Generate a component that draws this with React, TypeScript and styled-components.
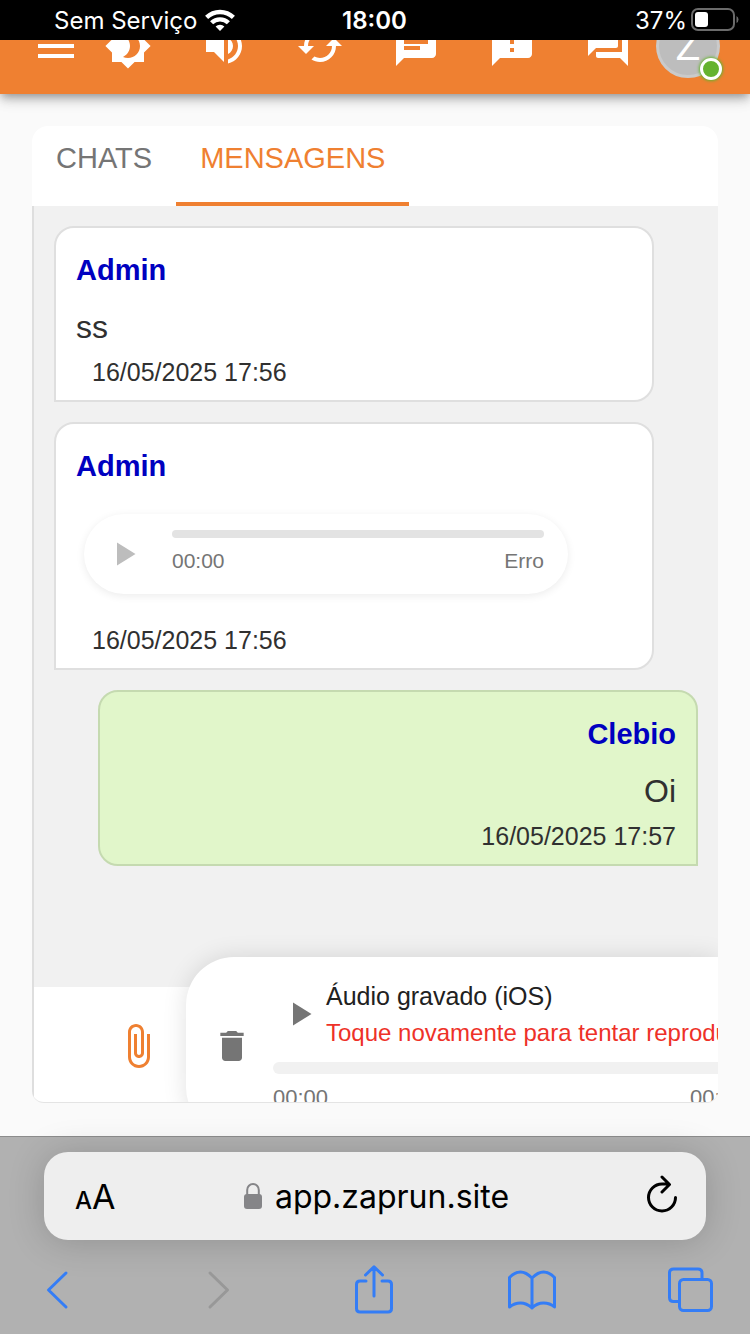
import React from "react";
import styled, { createGlobalStyle, css } from "styled-components";

const GlobalStyle = createGlobalStyle`
  *, *::before, *::after { box-sizing: border-box; }
  html, body, #root { height: 100%; }
  body {
    margin: 0;
    background: #fafafa;
    font-family: "Liberation Sans", Helvetica, Arial, sans-serif;
    color: #303030;
  }
  button {
    font: inherit;
    color: inherit;
    background: none;
    border: 0;
    padding: 0;
    cursor: pointer;
  }
  svg { display: block; flex: none; }
`;

const systemFont = css`
  font-family: Inter, "Liberation Sans", sans-serif;
`;

const Screen = styled.div`
  display: flex;
  flex-direction: column;
  min-height: 100vh;
  overflow: hidden;
`;

const StatusBar = styled.div`
  ${systemFont}
  position: relative;
  z-index: 3;
  display: grid;
  grid-template-columns: 1fr auto 1fr;
  align-items: center;
  height: 40px;
  padding: 0 11px 0 54px;
  background: #000;
  color: #fff;
  font-size: 24px;
`;

const StatusGroup = styled.div<{ $end?: boolean }>`
  display: flex;
  align-items: center;
  justify-content: ${(p) => (p.$end ? "flex-end" : "flex-start")};
  gap: ${(p) => (p.$end ? "4px" : "8px")};
`;

const Clock = styled.time`
  font-weight: 600;
  padding-right: 44px;
`;

const AppBar = styled.header`
  position: relative;
  z-index: 2;
  display: flex;
  align-items: flex-end;
  height: 54px;
  padding: 0 30px 0 32px;
  background: #ef8031;
  color: #fff;
  box-shadow: 0 4px 8px -2px rgba(0, 0, 0, 0.3), 0 8px 10px rgba(0, 0, 0, 0.1),
    0 2px 20px rgba(0, 0, 0, 0.1);
`;

const BarActions = styled.div`
  display: flex;
  flex: 1;
  justify-content: space-between;
  padding: 0 24px 24px 24px;
`;

const BarButton = styled.button`
  display: block;
`;

const MenuButton = styled(BarButton)`
  margin-bottom: 24px;
`;

const AvatarButton = styled.button`
  position: relative;
  width: 64px;
  height: 64px;
  margin-bottom: 16px;
  border-radius: 50%;
  border: 3px solid #cacaca;
  background: #bdbdbd;
  color: #fff;
  font-size: 40px;
  line-height: 56px;
`;

const OnlineDot = styled.span`
  position: absolute;
  right: -5px;
  bottom: -5px;
  width: 22px;
  height: 22px;
  border: 3px solid #fff;
  border-radius: 50%;
  background: #65b32e;
  box-shadow: 0 0 3px 1px #65b32e;
`;

const Page = styled.main`
  display: flex;
  flex: 1;
  flex-direction: column;
  padding: 32px 32px 33px;
`;

const Panel = styled.section`
  display: flex;
  flex: 1;
  flex-direction: column;
  overflow: hidden;
  border-radius: 16px 16px 12px 12px;
  border-bottom: 1px solid #e4e4e4;
  background: #fff;
`;

const Tabs = styled.nav`
  display: flex;
  height: 80px;
`;

const Tab = styled.button<{ $active?: boolean }>`
  height: 80px;
  padding: 0 24px 12px;
  border-bottom: 4px solid ${(p) => (p.$active ? "#ef8031" : "transparent")};
  color: ${(p) => (p.$active ? "#ef8031" : "#757575")};
  font-size: 29px;
  line-height: 32px;
`;

const Conversation = styled.div`
  display: flex;
  flex: 1;
  flex-direction: column;
  border-left: 2px solid #dedede;
`;

const Messages = styled.div`
  display: flex;
  flex: 1;
  flex-direction: column;
  gap: 20px;
  padding: 20px;
  background: #f1f1f1;
`;

const Bubble = styled.article<{ $own?: boolean }>`
  display: flex;
  flex-direction: column;
  width: 600px;
  max-width: 94%;
  padding: 24px 20px 12px;
  border: 2px solid ${(p) => (p.$own ? "#c5dab0" : "#dfdfdf")};
  border-radius: ${(p) => (p.$own ? "20px 20px 0 20px" : "20px 20px 20px 0")};
  background: ${(p) => (p.$own ? "#e1f6ca" : "#fff")};
  align-self: ${(p) => (p.$own ? "flex-end" : "flex-start")};
  align-items: ${(p) => (p.$own ? "flex-end" : "stretch")};
`;

const Author = styled.h2`
  margin: 0 0 20px;
  color: #0000c0;
  font-size: 29px;
  line-height: 36px;
`;

const MessageText = styled.p`
  margin: 0 0 10px;
  font-size: 32px;
  line-height: 38px;
`;

const Stamp = styled.time<{ $own?: boolean }>`
  padding-left: ${(p) => (p.$own ? "0" : "16px")};
  font-size: 25px;
  line-height: 32px;
`;

const Player = styled.div`
  display: flex;
  gap: 36px;
  width: 484px;
  height: 80px;
  margin: 10px 0 30px 8px;
  padding: 16px 24px 0 32px;
  border-radius: 40px;
  background: #fff;
  box-shadow: 0 2px 8px rgba(0, 0, 0, 0.08);
`;

const PlayButton = styled.button<{ $muted?: boolean }>`
  align-self: ${(p) => (p.$muted ? "flex-start" : "center")};
  color: ${(p) => (p.$muted ? "#bdbdbd" : "#757575")};
`;

const Timeline = styled.div`
  flex: 1;
`;

const Track = styled.div<{ $large?: boolean }>`
  height: ${(p) => (p.$large ? "12px" : "8px")};
  border-radius: 6px;
  background: ${(p) => (p.$large ? "#f1f1f1" : "#e3e3e3")};
`;

const Times = styled.div<{ $large?: boolean }>`
  display: flex;
  justify-content: space-between;
  padding-top: ${(p) => (p.$large ? "12px" : "11px")};
  color: #757575;
  font-size: ${(p) => (p.$large ? "22px" : "21px")};
  line-height: 24px;
`;

const Composer = styled.div`
  display: flex;
  height: 115px;
  justify-content: space-between;
`;

const AttachButton = styled.button`
  height: 48px;
  margin: 35px 0 0 80px;
  color: #ef8031;
`;

const Recorder = styled.div`
  position: relative;
  z-index: 1;
  display: flex;
  flex: none;
  width: 532px;
  height: 178px;
  margin-top: -30px;
  padding: 22px 0 0 26px;
  border-radius: 48px 0 0 48px;
  background: #fff;
  box-shadow: 0 0 24px rgba(0, 0, 0, 0.12);
`;

const TrashButton = styled.button`
  width: 40px;
  height: 40px;
  margin-top: 47px;
  color: #757575;
`;

const Recording = styled.div`
  display: flex;
  flex: none;
  flex-direction: column;
  width: 472px;
  margin-left: 21px;
`;

const RecordingHead = styled.div`
  display: flex;
  gap: 14px;
  padding-left: 19px;
`;

const RecordingTitle = styled.div`
  color: #212121;
  font-size: 25px;
  line-height: 34px;
  white-space: nowrap;
`;

const RecordingError = styled.div`
  margin-top: 4px;
  color: #ee3128;
  font-size: 24px;
  line-height: 32px;
  white-space: nowrap;
`;

const RecordingTimeline = styled.div`
  padding-top: 13px;
`;

const Browser = styled.footer`
  ${systemFont}
  height: 198px;
  border-top: 1px solid #8c8c8c;
  background: #b1b1b1;
`;

const AddressBar = styled.div`
  display: grid;
  grid-template-columns: 1fr auto 1fr;
  align-items: center;
  height: 88px;
  margin: 15px 44px 0;
  padding: 0 28px 0 31px;
  border-radius: 24px;
  background: #eee;
  box-shadow: 0 2px 36px rgba(0, 0, 0, 0.18);
  color: #000;
`;

const TextSize = styled.button`
  justify-self: start;
  padding-top: 6px;
  font-size: 24px;
  font-weight: 500;
  line-height: 44px;
`;

const LargeLetter = styled.span`
  font-size: 34px;
  font-weight: 400;
`;

const Address = styled.div`
  display: flex;
  align-items: center;
  gap: 13px;
  font-size: 32px;
`;

const ReloadButton = styled.button`
  justify-self: end;
`;

const Toolbar = styled.nav`
  display: flex;
  justify-content: space-between;
  align-items: center;
  height: 52px;
  margin: 24px 35px 0 32px;
  color: #347df6;
`;

const ToolButton = styled.button`
  display: flex;
  justify-content: center;
  width: 50px;
  &:disabled { color: #989898; }
`;

const icons = {
  menu: "M3 18h18v-2H3v2zm0-5h18v-2H3v2zm0-7v2h18V6H3z",
  theme:
    "M20 8.69V4h-4.69L12 .69 8.69 4H4v4.69L.69 12 4 15.31V20h4.69L12 23.31 15.31 20H20v-4.69L23.31 12 20 8.69zM12 18c-.89 0-1.74-.2-2.5-.55C11.56 16.5 13 14.42 13 12s-1.44-4.5-3.5-5.45C10.26 6.2 11.11 6 12 6c3.31 0 6 2.69 6 6s-2.69 6-6 6z",
  volume:
    "M3 9v6h4l5 5V4L7 9H3zm13.5 3c0-1.77-1.02-3.29-2.5-4.03v8.05c1.48-.73 2.5-2.25 2.5-4.02zM14 3.23v2.06c2.89.86 5 3.54 5 6.71s-2.11 5.85-5 6.71v2.06c4.01-.91 7-4.49 7-8.77s-2.99-7.86-7-8.77z",
  sync:
    "M19 8l-4 4h3c0 3.31-2.69 6-6 6-1.01 0-1.97-.25-2.8-.7l-1.46 1.46C8.97 19.54 10.43 20 12 20c4.42 0 8-3.58 8-8h3l-4-4zM6 12c0-3.31 2.69-6 6-6 1.01 0 1.97.25 2.8.7l1.46-1.46C15.03 4.46 13.57 4 12 4c-4.42 0-8 3.58-8 8H1l4 4 4-4H6z",
  chat:
    "M20 2H4c-1.1 0-1.99.9-1.99 2L2 22l4-4h14c1.1 0 2-.9 2-2V4c0-1.1-.9-2-2-2zM6 9h12v2H6V9zm8 5H6v-2h8v2zm4-6H6V6h12v2z",
  notice:
    "M20 2H4c-1.1 0-1.99.9-1.99 2L2 22l4-4h14c1.1 0 2-.9 2-2V4c0-1.1-.9-2-2-2zm-7 9h-2V5h2v6zm0 4h-2v-2h2v2z",
  forum:
    "M21 6h-2v9H6v2c0 .55.45 1 1 1h11l4 4V7c0-.55-.45-1-1-1zm-4 6V3c0-.55-.45-1-1-1H3c-.55 0-1 .45-1 1v14l4-4h10c.55 0 1-.45 1-1z",
  attach:
    "M16.5 6v11.5c0 2.21-1.79 4-4 4s-4-1.79-4-4V5c0-1.38 1.12-2.5 2.5-2.5s2.5 1.12 2.5 2.5v10.5c0 .55-.45 1-1 1s-1-.45-1-1V6H10v9.5c0 1.38 1.12 2.5 2.5 2.5s2.5-1.12 2.5-2.5V5c0-2.21-1.79-4-4-4S7 2.79 7 5v12.5c0 3.04 2.46 5.5 5.5 5.5s5.5-2.46 5.5-5.5V6h-1.5z",
  trash:
    "M6 19c0 1.1.9 2 2 2h8c1.1 0 2-.9 2-2V7H6v12zM19 4h-3.5l-1-1h-5l-1 1H5v2h14V4z",
};

const Icon = ({ name, size = 48 }: { name: keyof typeof icons; size?: number }) => (
  <svg width={size} height={size} viewBox="0 0 24 24" fill="currentColor" aria-hidden="true">
    <path d={icons[name]} />
  </svg>
);

const PlayIcon = () => (
  <svg width="20" height="48" viewBox="0 0 20 48" fill="currentColor" aria-hidden="true">
    <path d="M1 12.5v23L19.5 24z" />
  </svg>
);

const LineIcon = ({ width, height, children }: { width: number; height: number; children: React.ReactNode }) => (
  <svg
    width={width}
    height={height}
    viewBox={`0 0 ${width} ${height}`}
    fill="none"
    stroke="currentColor"
    strokeWidth={3}
    strokeLinecap="round"
    strokeLinejoin="round"
    aria-hidden="true"
  >
    {children}
  </svg>
);

const barActions: { name: keyof typeof icons; label: string }[] = [
  { name: "theme", label: "Tema" },
  { name: "volume", label: "Volume" },
  { name: "sync", label: "Atualizar" },
  { name: "chat", label: "Chat" },
  { name: "notice", label: "Avisos" },
  { name: "forum", label: "Conversas" },
];

export default function App() {
  return (
    <Screen>
      <GlobalStyle />
      <StatusBar>
        <StatusGroup>
          Sem Serviço
          <svg width="30" height="22" viewBox="0 0 30 22" fill="none" stroke="#fff" strokeWidth="4.4" aria-hidden="true">
            <path d="M1.6 8.4a19.200 19.200 0 0 1 26.8 0" />
            <path d="M6.600 13.800a12 12 0 0 1 16.800 0" />
            <path d="M15 22l-4.400-4.600a6.400 6.400 0 0 1 8.800 0z" fill="#fff" stroke="none" />
          </svg>
        </StatusGroup>
        <Clock>18:00</Clock>
        <StatusGroup $end>
          37%
          <svg width="48" height="24" viewBox="0 0 48 24" aria-hidden="true">
            <rect x="1" y="1" width="42" height="21" rx="6" fill="none" stroke="#6b6b6b" strokeWidth="2" />
            <rect x="4" y="4" width="13" height="15" rx="3" fill="#fff" />
            <path d="M45.5 8v7q2-1 2-3.500t-2-3.500z" fill="#6b6b6b" />
          </svg>
        </StatusGroup>
      </StatusBar>

      <AppBar>
        <MenuButton aria-label="Menu">
          <Icon name="menu" />
        </MenuButton>
        <BarActions>
          {barActions.map((a) => (
            <BarButton key={a.name} aria-label={a.label}>
              <Icon name={a.name} />
            </BarButton>
          ))}
        </BarActions>
        <AvatarButton aria-label="Conta">
          Z
          <OnlineDot />
        </AvatarButton>
      </AppBar>

      <Page>
        <Panel>
          <Tabs>
            <Tab>CHATS</Tab>
            <Tab $active>MENSAGENS</Tab>
          </Tabs>
          <Conversation>
            <Messages>
              <Bubble>
                <Author>Admin</Author>
                <MessageText>ss</MessageText>
                <Stamp>16/05/2025 17:56</Stamp>
              </Bubble>
              <Bubble>
                <Author>Admin</Author>
                <Player>
                  <PlayButton $muted aria-label="Reproduzir">
                    <PlayIcon />
                  </PlayButton>
                  <Timeline>
                    <Track />
                    <Times>
                      <span>00:00</span>
                      <span>Erro</span>
                    </Times>
                  </Timeline>
                </Player>
                <Stamp>16/05/2025 17:56</Stamp>
              </Bubble>
              <Bubble $own>
                <Author>Clebio</Author>
                <MessageText>Oi</MessageText>
                <Stamp $own>16/05/2025 17:57</Stamp>
              </Bubble>
            </Messages>
            <Composer>
              <AttachButton aria-label="Anexar">
                <Icon name="attach" />
              </AttachButton>
              <Recorder>
                <TrashButton aria-label="Excluir">
                  <Icon name="trash" size={40} />
                </TrashButton>
                <Recording>
                  <RecordingHead>
                    <PlayButton aria-label="Reproduzir gravação">
                      <PlayIcon />
                    </PlayButton>
                    <div>
                      <RecordingTitle>Áudio gravado (iOS)</RecordingTitle>
                      <RecordingError>Toque novamente para tentar reproduzir</RecordingError>
                    </div>
                  </RecordingHead>
                  <RecordingTimeline>
                    <Track $large />
                    <Times $large>
                      <span>00:00</span>
                      <span>00:00</span>
                    </Times>
                  </RecordingTimeline>
                </Recording>
              </Recorder>
            </Composer>
          </Conversation>
        </Panel>
      </Page>

      <Browser>
        <AddressBar>
          <TextSize aria-label="Tamanho do texto">
            A<LargeLetter>A</LargeLetter>
          </TextSize>
          <Address>
            <svg width="18" height="26" viewBox="0 0 18 26" aria-hidden="true">
              <path d="M3.200 12V7a5.800 6 0 0 1 11.600 0v5" fill="none" stroke="#858588" strokeWidth="2" />
              <rect y="11" width="18" height="15" rx="3" fill="#858588" />
            </svg>
            app.zaprun.site
          </Address>
          <ReloadButton aria-label="Recarregar">
            <LineIcon width={32} height={42}>
              <path d="M29.500 22.500A13.500 13.500 0 1 1 16 9h7M16 2l7.500 7.500L16 17" />
            </LineIcon>
          </ReloadButton>
        </AddressBar>
        <Toolbar>
          <ToolButton aria-label="Voltar">
            <LineIcon width={26} height={40}>
              <path d="M22 3L4.500 20 22 37" />
            </LineIcon>
          </ToolButton>
          <ToolButton aria-label="Avançar" disabled>
            <LineIcon width={34} height={40}>
              <path d="M12 3l17.500 17L12 37" />
            </LineIcon>
          </ToolButton>
          <ToolButton aria-label="Compartilhar">
            <LineIcon width={38} height={50}>
              <path d="M11 16H5q-3.500 0-3.500 3.500v24Q1.500 47 5 47h28q3.500 0 3.500-3.500v-24Q36.500 16 33 16h-6M19 31V2M10.500 10L19 1.800 27.500 10" />
            </LineIcon>
          </ToolButton>
          <ToolButton aria-label="Favoritos">
            <LineIcon width={48} height={40}>
              <path d="M24 8Q18 2 12.500 2T1.500 7.500V37q5-4 11-4T24 38Q29 33 35.500 33T46.500 37V7.500Q41 2 35.500 2T24 8zV38" />
            </LineIcon>
          </ToolButton>
          <ToolButton aria-label="Abas">
            <LineIcon width={46} height={46}>
              <path d="M12 34.500H6.500q-4 0-4-4V6q0-4 4-4H31q4 0 4 4v5" />
              <rect x="12.500" y="12.500" width="32" height="31" rx="4" />
            </LineIcon>
          </ToolButton>
        </Toolbar>
      </Browser>
    </Screen>
  );
}
